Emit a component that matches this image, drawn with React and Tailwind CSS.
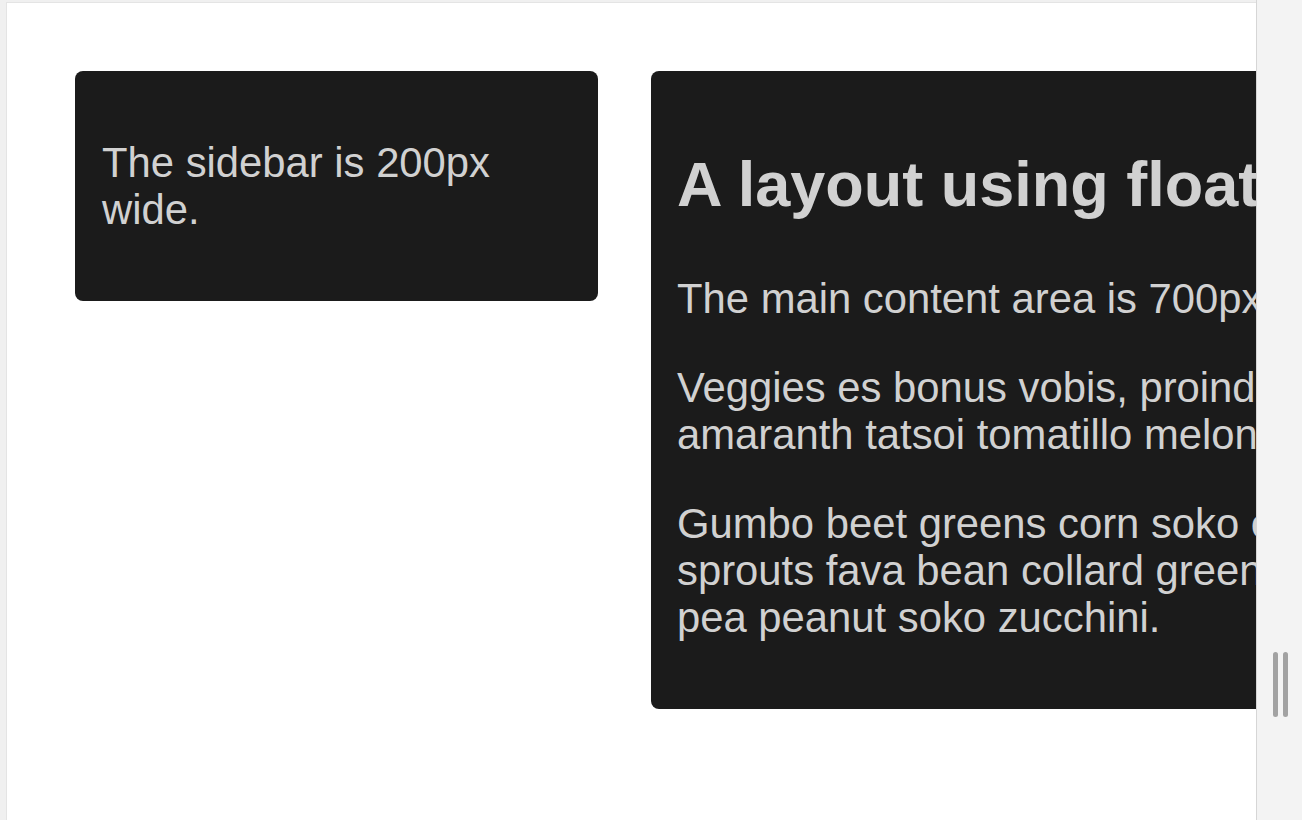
import React from "react";

export default function App() {
  return (
    <div
      className="w-[1302px] h-[820px] flex bg-[#f0f0f0] overflow-hidden"
      style={{ fontFamily: '"Liberation Sans", Arial, sans-serif' }}
    >
      <div className="ml-[6px] mt-[2px] w-[1250px] h-[818px] shrink-0 bg-white border-l border-t border-[#e4e4e4] overflow-hidden">
        <div className="flex items-start gap-[53px] pl-[68px] pt-[68px] w-max">
          <div className="w-[523px] shrink-0 rounded-[8px] bg-[#1b1b1b] px-[27px] py-[26px] text-[#d1d1d1] text-[41.8px] leading-[47px]">
            <p className="my-[42px]">
              The sidebar is 200px
              <br />
              wide.
            </p>
          </div>
          <div className="w-[1500px] shrink-0 rounded-[8px] bg-[#1b1b1b] px-[26px] py-[26px] text-[#d1d1d1] text-[41.8px] leading-[47px] whitespace-nowrap">
            <h1 className="mt-[51px] text-[63px] leading-[72px] font-bold">A layout using floats</h1>
            <p className="mt-[55px]">The main content area is 700px wide.</p>
            <p className="mt-[42px]">
              Veggies es bonus vobis, proinde vos postulo essum magis kohlrabi welsh onion daikon
              <br />
              amaranth tatsoi tomatillo melon azuki bean garlic.
            </p>
            <p className="mt-[42px] mb-[42px]">
              Gumbo beet greens corn soko endive gumbo gourd. Parsley shallot courgette tatsoi pea
              <br />
              sprouts fava bean collard greens dandelion okra wakame tomato. Dandelion cucumber earthnut
              <br />
              pea peanut soko zucchini.
            </p>
          </div>
        </div>
      </div>
      <div className="flex-1 bg-[#f3f3f3] border-l border-[#d6d6d6] flex gap-[5px] pl-[16px] pt-[652px]">
        <div className="w-[5px] h-[65px] rounded-full bg-[#a2a2a2]" />
        <div className="w-[5px] h-[65px] rounded-full bg-[#a2a2a2]" />
      </div>
    </div>
  );
}
